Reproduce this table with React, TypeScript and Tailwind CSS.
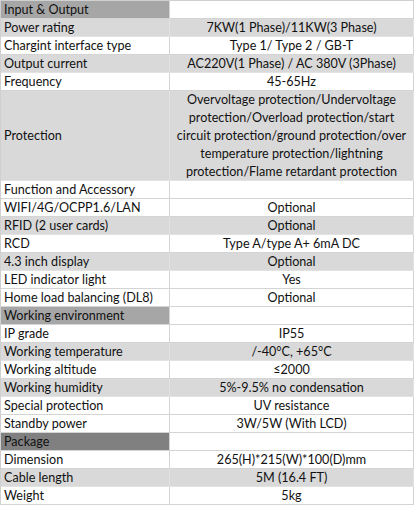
import React from "react";

type Row =
  | { kind: "header"; label: string; tone: "mid" | "dark" }
  | { kind: "row"; label: string; value: string | string[]; gray?: boolean };

const rows: Row[] = [
  { kind: "header", label: "Input & Output", tone: "mid" },
  { kind: "row", label: "Power rating", value: "7KW(1 Phase)/11KW(3 Phase)", gray: true },
  { kind: "row", label: "Chargint interface type", value: "Type 1/ Type 2 / GB-T" },
  { kind: "row", label: "Output current", value: "AC220V(1 Phase) / AC 380V (3Phase)", gray: true },
  { kind: "row", label: "Frequency", value: "45-65Hz" },
  {
    kind: "row",
    label: "Protection",
    value: [
      "Overvoltage protection/Undervoltage",
      "protection/Overload protection/start",
      "circuit protection/ground protection/over",
      "temperature protection/lightning",
      "protection/Flame retardant protection",
    ],
    gray: true,
  },
  { kind: "row", label: "Function and Accessory", value: "" },
  { kind: "row", label: "WIFI/4G/OCPP1.6/LAN", value: "Optional" },
  { kind: "row", label: "RFID (2 user cards)", value: "Optional", gray: true },
  { kind: "row", label: "RCD", value: "Type A/type A+ 6mA DC" },
  { kind: "row", label: "4.3 inch display", value: "Optional", gray: true },
  { kind: "row", label: "LED indicator light", value: "Yes" },
  { kind: "row", label: "Home load balancing (DL8)", value: "Optional" },
  { kind: "header", label: "Working environment", tone: "mid" },
  { kind: "row", label: "IP grade", value: "IP55" },
  { kind: "row", label: "Working temperature", value: "/-40°C, +65°C", gray: true },
  { kind: "row", label: "Working altitude", value: "≤2000" },
  { kind: "row", label: "Working humidity", value: "5%-9.5% no condensation", gray: true },
  { kind: "row", label: "Special protection", value: "UV resistance" },
  { kind: "row", label: "Standby power", value: "3W/5W (With LCD)" },
  { kind: "header", label: "Package", tone: "dark" },
  { kind: "row", label: "Dimension", value: "265(H)*215(W)*100(D)mm" },
  { kind: "row", label: "Cable length", value: "5M (16.4 FT)", gray: true },
  { kind: "row", label: "Weight", value: "5kg" },
];

export default function App() {
  return (
    <div
      className="w-[415px] h-[506px] overflow-hidden bg-white text-[#111] text-[12.6px]"
      style={{ fontFamily: "Lato, 'Open Sans', sans-serif" }}
    >
      <div className="grid grid-cols-[169px_244px] w-[414px] border-l border-t border-[#d0d0d0]">
        {rows.map((r, i) => {
          if (r.kind === "header") {
            const bg = r.tone === "dark" ? "bg-[#808080]" : "bg-[#a6a6a6]";
            return (
              <React.Fragment key={i}>
                <div className={`h-[18px] flex items-center pl-[3px] pt-px border-r border-b border-[#d4d4d4] ${bg}`}>
                  {r.label}
                </div>
                <div className="h-[18px] border-r border-b border-[#d4d4d4] bg-white" />
              </React.Fragment>
            );
          }
          const multi = Array.isArray(r.value);
          const bg = r.gray ? "bg-[#d9d9d9]" : "bg-white";
          const bc = r.gray ? "border-[#e2e2e2]" : "border-[#d4d4d4]";
          return (
            <React.Fragment key={i}>
              <div
                className={`${multi ? "h-[90px]" : "h-[18px]"} flex items-center pl-[3px] pt-px border-r border-b ${bc} ${bg} whitespace-nowrap`}
              >
                {r.label}
              </div>
              <div
                className={`${multi ? "h-[90px]" : "h-[18px]"} flex flex-col items-center justify-center pt-px border-r border-b ${bc} ${bg} whitespace-nowrap`}
              >
                {multi ? (
                  (r.value as string[]).map((l, j) => (
                    <div key={j} className="h-[18px] leading-[18px]">
                      {l}
                    </div>
                  ))
                ) : (
                  <span>{r.value}</span>
                )}
              </div>
            </React.Fragment>
          );
        })}
      </div>
    </div>
  );
}
